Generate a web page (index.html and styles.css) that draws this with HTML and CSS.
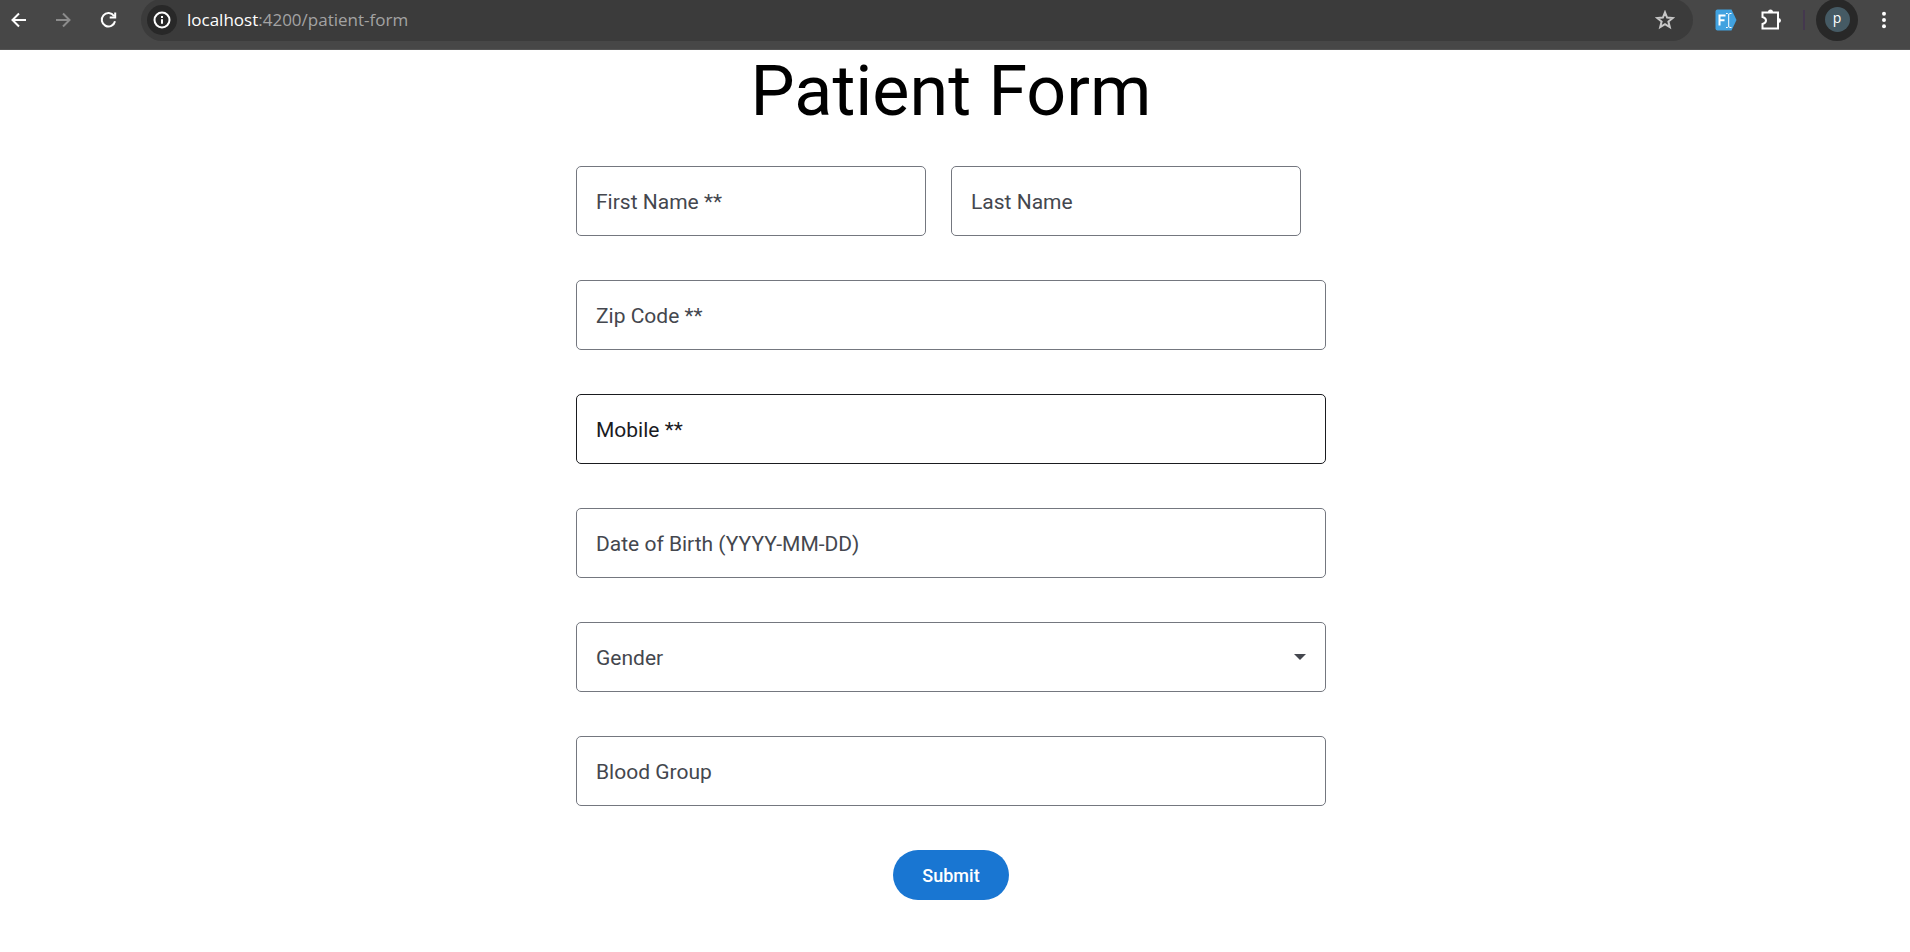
FILE: index.html
```html
<!DOCTYPE html>
<html lang="en">
<head>
<meta charset="utf-8">
<title>Patient Form</title>
<link rel="stylesheet" href="styles.css">
</head>
<body>
<header class="toolbar">
  <nav class="nav-buttons">
    <button class="icon-button" type="button" aria-label="Back">
      <svg class="icon" viewBox="0 0 20 20"><path d="M17 10H4M10 3.5 3.5 10l6.500 6.500"/></svg>
    </button>
    <button class="icon-button muted" type="button" aria-label="Forward">
      <svg class="icon" viewBox="0 0 20 20"><path d="M2 10h13M9 3.500 15.500 10 9 16.500"/></svg>
    </button>
    <button class="icon-button" type="button" aria-label="Reload">
      <svg class="icon" viewBox="0 0 20 20"><path d="M15 6A6.700 6.700 0 1 0 16 11.200M16.200 2.500v5h-5.500"/></svg>
    </button>
  </nav>
  <div class="address-bar">
    <button class="site-info" type="button" aria-label="View site information">
      <svg class="icon" viewBox="0 0 20 20"><circle cx="10" cy="10" r="7.500"/><path d="M10 9.200v4.500M10 6v2"/></svg>
    </button>
    <div class="url" role="textbox" aria-label="Address" contenteditable="true" spellcheck="false"><span class="host">localhost</span>:4200/patient-form</div>
    <button class="icon-button star" type="button" aria-label="Bookmark this tab">
      <svg class="icon" viewBox="0 0 20 20"><path d="m10 2.300 2.100 5.300 5.700.4-4.400 3.600 1.400 5.600-4.800-3-4.800 3 1.400-5.600L2.200 8l5.700-.4z"/></svg>
    </button>
  </div>
  <div class="actions">
    <button class="icon-button" type="button" aria-label="Form filler">
      <svg class="badge-icon" viewBox="0 0 22 22"><path class="tag" d="M2.500 0.500H16.500L21.500 11 16.500 21.500H2.500Q.5 21.500.5 19.500V2.500Q.5.5 2.500.5z"/><path class="mark" d="M4.500 16.500V6.500H10.500M4.500 11.300H9.500"/><path class="cursor" d="M11 4.500h1.500l1.200 1 1.200-1H16.500M13.700 5.500v12M11 18.500h1.500l1.200-1 1.200 1H16.500"/></svg>
    </button>
    <button class="icon-button" type="button" aria-label="Extensions">
      <svg class="icon puzzle" viewBox="0 0 22 22"><path class="piece" d="M2.500 3.500H18V19.500H2.500V15Q6 14 6 11.500T2.500 8z"/><path class="knob" d="M8 3a2.500 2.500 0 0 1 5 0zM18.500 9a2.500 2.500 0 0 1 0 5z"/></svg>
    </button>
    <span class="divider"></span>
    <button class="profile" type="button" aria-label="Profile"><span class="avatar">p</span></button>
    <button class="icon-button menu" type="button" aria-label="Menu">
      <svg class="dots" viewBox="0 0 20 20"><circle cx="10" cy="3" r="2.200"/><circle cx="10" cy="10" r="2.200"/><circle cx="10" cy="17" r="2.200"/></svg>
    </button>
  </div>
</header>
<main class="page">
  <h1 class="title">Patient Form</h1>
  <form class="form">
    <div class="row">
      <div class="field"><input class="control" id="first-name" type="text"><label class="label" for="first-name">First Name **</label></div>
      <div class="field"><input class="control" id="last-name" type="text"><label class="label" for="last-name">Last Name</label></div>
    </div>
    <div class="field"><input class="control" id="zip" type="text"><label class="label" for="zip">Zip Code **</label></div>
    <div class="field active"><input class="control" id="mobile" type="tel"><label class="label" for="mobile">Mobile **</label></div>
    <div class="field"><input class="control" id="dob" type="text"><label class="label" for="dob">Date of Birth (YYYY-MM-DD)</label></div>
    <div class="field">
      <select class="control" id="gender"><option value="" selected></option></select>
      <label class="label" for="gender">Gender</label>
      <svg class="arrow" viewBox="0 0 12 6"><path d="M0 0h12L6 6z"/></svg>
    </div>
    <div class="field"><input class="control" id="blood" type="text"><label class="label" for="blood">Blood Group</label></div>
    <button class="submit" type="submit">Submit</button>
  </form>
</main>
</body>
</html>
```
FILE: styles.css
```css
* { box-sizing: border-box; }

body {
  margin: 0;
  background: #fff;
  font-family: Roboto, "Liberation Sans", sans-serif;
}

button {
  border: 0;
  padding: 0;
  background: none;
  font: inherit;
  cursor: pointer;
}

.toolbar {
  display: flex;
  height: 50px;
  padding-bottom: 10px;
  align-items: center;
  background: #474747;
  border-bottom: 1px solid #555;
}

.nav-buttons {
  display: flex;
  flex: none;
  margin-left: -4px;
  margin-right: 10px;
}

.icon-button {
  display: grid;
  place-items: center;
  width: 45px;
  height: 40px;
  color: #fff;
}

.muted { color: #8c8c8c; }

.icon {
  width: 20px;
  height: 20px;
  fill: none;
  stroke: currentColor;
  stroke-width: 2;
}

.address-bar {
  display: flex;
  flex: 1;
  align-items: center;
  height: 42px;
  padding: 0 6px;
  border-radius: 21px;
  background: #3b3b3b;
}

.site-info {
  display: grid;
  place-items: center;
  width: 30px;
  height: 30px;
  border-radius: 50%;
  background: #282828;
  color: #fff;
}

.url {
  flex: 1;
  margin-left: 10px;
  padding-top: 1px;
  font-family: "Open Sans", "Noto Sans", sans-serif;
  font-size: 17px;
  line-height: 24px;
  color: #a3a3a3;
}

.host { color: #fff; }
.star { color: #c7c7c7; }

.actions {
  display: flex;
  flex: none;
  align-items: center;
  margin-left: 10px;
}

.badge-icon { width: 22px; height: 22px; fill: none; stroke: #fff; }
.tag { fill: #41a2e0; stroke: none; }
.mark { stroke-width: 2; }
.cursor { stroke-width: 1; }
.puzzle { width: 22px; height: 22px; }
.knob { fill: currentColor; stroke: none; }

.divider {
  width: 2px;
  height: 20px;
  margin: 0 11px 0 10px;
  background: #44384e;
}

.profile {
  display: grid;
  place-items: center;
  width: 42px;
  height: 42px;
  border-radius: 50%;
  background: #282828;
}

.avatar {
  width: 25px;
  height: 25px;
  border-radius: 50%;
  background: #455a64;
  color: #fff;
  font-family: "Open Sans", "Noto Sans", sans-serif;
  font-size: 14px;
  line-height: 22px;
}

.menu { width: 52px; }
.dots { width: 18px; height: 18px; fill: currentColor; }

.page { padding: 0 8px 50px 0; }

.title {
  margin: 0;
  font-size: 70px;
  font-weight: 400;
  line-height: 82px;
  text-align: center;
}

.form {
  display: flex;
  flex-direction: column;
  gap: 44px;
  max-width: 750px;
  margin: 34px auto 0;
}

.row {
  display: flex;
  gap: 25px;
  padding-right: 25px;
}

.field {
  display: grid;
  flex: 1;
  align-items: center;
  color: #44474e;
}

.control,
.label,
.arrow { grid-area: 1 / 1; }

.control {
  width: 100%;
  height: 70px;
  padding: 20px;
  border: 1px solid #74777f;
  border-radius: 5px;
  background: #fff;
  font: inherit;
  font-size: 21px;
  appearance: none;
}

.label {
  padding: 2px 20px 0;
  font-size: 21px;
  line-height: 30px;
  pointer-events: none;
}

.active { color: #1a1b1f; }
.active .control { border-color: #1a1b1f; }

.arrow {
  justify-self: end;
  width: 12px;
  height: 6px;
  margin-right: 20px;
  fill: currentColor;
  pointer-events: none;
}

.submit {
  align-self: center;
  height: 50px;
  padding: 0 29px;
  border-radius: 25px;
  background: #1976d2;
  color: #fff;
  font-size: 18px;
  font-weight: 500;
}
```
